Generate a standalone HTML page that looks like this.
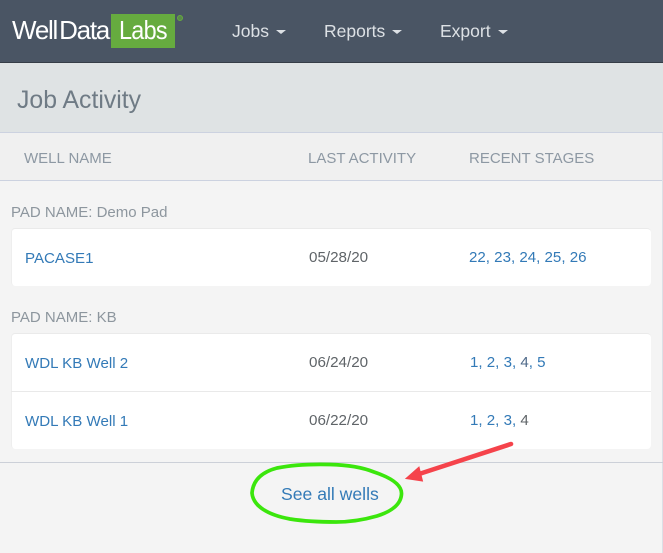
<!DOCTYPE html>
<html><head><meta charset="utf-8"><style>
html,body{margin:0;padding:0}
body{width:663px;height:553px;overflow:hidden;position:relative;background:#f4f4f4;font-family:"Liberation Sans",sans-serif}
.a{position:absolute;white-space:nowrap}
.b{position:absolute}
.nav{color:#dde1e5;font-size:17.5px;line-height:20px;top:21px}
.car{position:absolute;top:30px;width:0;height:0;border-left:5px solid transparent;border-right:5px solid transparent;border-top:4.5px solid #dde1e5}
.th{color:#8d98a3;font-size:15px;line-height:18px;top:150px}
.pad{color:#8d969e;font-size:15px;line-height:18px;left:11px}
.l{color:#337ab7;font-size:15.1px;line-height:18px}
.d{color:#5f6468;font-size:15.2px;line-height:18px;left:309px}
.card{position:absolute;left:11px;width:640px;background:#fff;border-radius:4px;border-top:1px solid #eaeaea;border-left:1px solid #eee;box-sizing:border-box}
</style></head><body>
<div class="b" style="left:0;top:0;width:663px;height:62px;background:#4a5564"></div>
<div class="b" style="left:0;top:62px;width:663px;height:1px;background:#363d47"></div>
<div class="a" style="left:12px;top:15px;color:#fff;font-size:26px;line-height:30px;letter-spacing:-1.25px">Well<span style="margin-left:2px">Data</span></div>
<div class="b" style="left:111px;top:14px;width:64px;height:34px;background:#66ab3f"></div>
<div class="a" style="left:119px;top:15px;color:#fff;font-size:26px;line-height:30px;letter-spacing:-.8px;transform:scaleX(.9);transform-origin:0 0">Labs</div>
<div class="b" style="left:177px;top:15px;width:4px;height:4px;border:1px solid #66ab3f;border-radius:50%;background:#5a8a4a"></div>
<div class="a nav" style="left:232px">Jobs</div><div class="car" style="left:276px"></div>
<div class="a nav" style="left:324px">Reports</div><div class="car" style="left:392px"></div>
<div class="a nav" style="left:440px">Export</div><div class="car" style="left:498px"></div>

<div class="b" style="left:0;top:63px;width:663px;height:69px;background:#dfe3e4"></div>
<div class="b" style="left:0;top:132px;width:663px;height:1px;background:#ccd2e0"></div>
<div class="a" style="left:17px;top:86px;color:#6f7b85;font-size:24.8px;line-height:30px">Job Activity</div>

<div class="b" style="left:0;top:133px;width:663px;height:47px;background:#f0f0f0"></div>
<div class="b" style="left:0;top:180px;width:663px;height:1px;background:#ccd2e0"></div>
<div class="b" style="left:662px;top:133px;width:1px;height:420px;background:#dcdfe6"></div>
<div class="a th" style="left:24px">WELL NAME</div>
<div class="a th" style="left:308px">LAST ACTIVITY</div>
<div class="a th" style="left:469px">RECENT STAGES</div>

<div class="a pad" style="top:204px">PAD NAME: Demo Pad</div>
<div class="card" style="top:228px;height:58px"></div>
<div class="a l" style="left:25px;top:250px">PACASE1</div>
<div class="a d" style="top:249px">05/28/20</div>
<div class="a l" style="left:469px;top:249px">22, 23, 24, 25, 26</div>

<div class="a pad" style="top:309px">PAD NAME: KB</div>
<div class="card" style="top:333px;height:116px"></div>
<div class="b" style="left:11px;top:391px;width:640px;height:1px;background:#e9e9e9"></div>
<div class="a l" style="left:25px;top:355px">WDL KB Well 2</div>
<div class="a d" style="top:354px">06/24/20</div>
<div class="a l" style="left:470px;top:354px">1, 2, 3, <span style="color:#4f6a8a">4</span>, 5</div>
<div class="a l" style="left:25px;top:413px">WDL KB Well 1</div>
<div class="a d" style="top:412px">06/22/20</div>
<div class="a l" style="left:470px;top:412px">1, 2, 3, <span style="color:#5f6468">4</span></div>

<div class="b" style="left:0;top:462px;width:663px;height:1px;background:#ccd0d8"></div>
<div class="a" style="left:281px;top:484px;color:#337ab7;font-size:17.6px;line-height:20px">See all wells</div>

<svg class="b" style="left:0;top:0" width="663" height="553" viewBox="0 0 663 553">
<path d="M252 493C253 480 262 472 277 468C292 465 312 464 330 464.500C350 465 364 468 374 472C392 478 402 485 401.500 494C401 505 390 512 377 516C363 520 350 522 336 522C318 522 303 521 290 519C268 515 253 506 252 493Z" fill="none" stroke="#3be60c" stroke-width="3.700"/>
<path d="M511 444L416 475" fill="none" stroke="#f5434b" stroke-width="4.600" stroke-linecap="round"/>
<path d="M406 478.500L419 467L422.500 481Z" fill="#f5434b" stroke="#f5434b" stroke-width="1"/>
</svg>
</body></html>
